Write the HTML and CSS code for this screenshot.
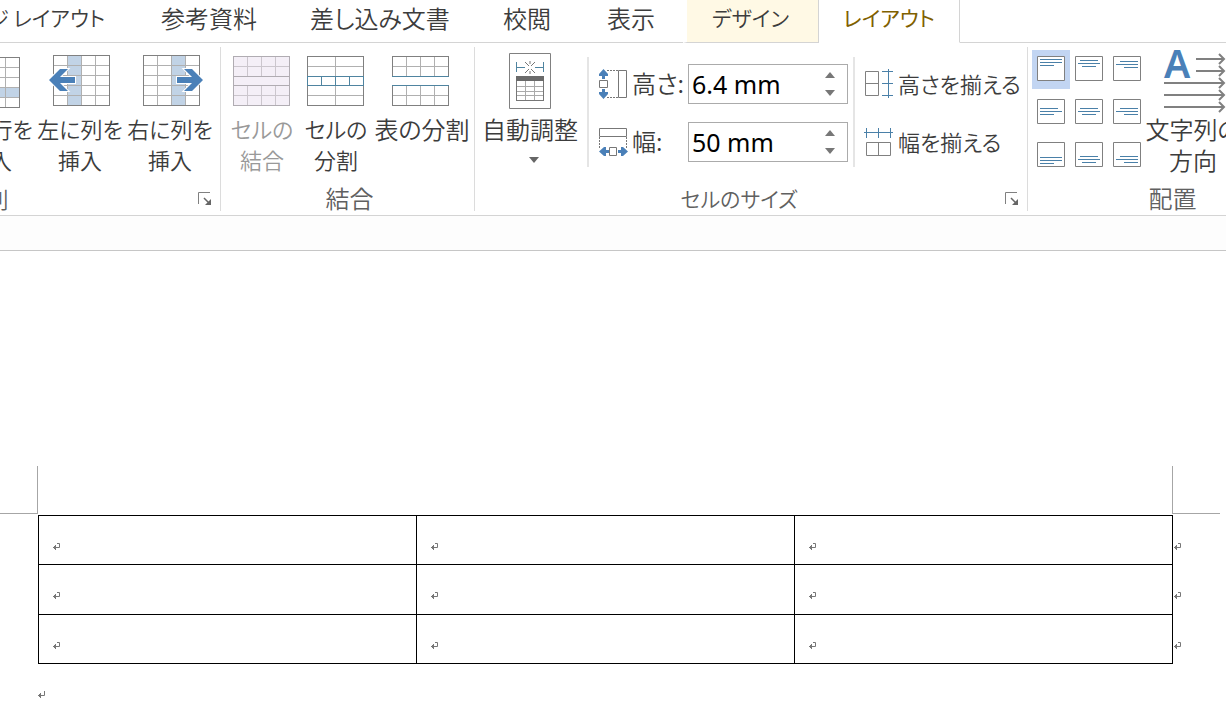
FILE: index.html
```html
<!DOCTYPE html>
<html lang="ja">
<head>
  <meta charset="utf-8">
  <title>レイアウト</title>
  <link rel="stylesheet" href="styles.css">
</head>
<body>

  <svg width="0" height="0" class="defs">
    <symbol id="cell-mark" viewBox="0 0 8 8">
      <path d="M4 .5h2.500v4h-4M2.500 2v5M1.500 3v3M.5 4v1" fill="none" stroke="#777"/>
    </symbol>
    <symbol id="para-mark" viewBox="0 0 8 8">
      <path d="M6.500 0v4.500h-4M2.500 2v5M1.500 3v3M.5 4v1" fill="none" stroke="#777"/>
    </symbol>
    <symbol id="launcher" viewBox="0 0 14 14">
      <path d="M.5 12V.5H12" fill="none" stroke="#808080"/>
      <path d="M6 6l5 5" stroke="#666" stroke-width="1.500"/>
      <path d="M13 7v6H7z" fill="#666"/>
    </symbol>
  </svg>

  <nav class="tabs">
    <button class="tab tab-first kana">ページ レイアウト</button>
    <button class="tab tab-wide">参考資料</button>
    <button class="tab tab-wider">差し込み文書</button>
    <button class="tab">校閲</button>
    <button class="tab">表示</button>
    <button class="tab tab-tool kana">デザイン</button>
    <button class="tab tab-active kana">レイアウト</button>
    <div class="tab-rest"></div>
  </nav>

  <div class="ribbon">
    <!-- rows and columns -->
    <section class="group group-rows">
      <div class="tools">
        <button class="big mixed">
          <svg width="64" height="60" shape-rendering="crispEdges">
            <path d="M5 37h56v10H5z" fill="#c1d3e6"/>
            <path d="M19.500 7v50M33.500 7v50M47.500 7v50M5 17.500h56M5 27.500h56M5 37.500h56M5 47.500h56" stroke="#b0b0b0" fill="none"/>
            <path d="M5.500 7.500h56v50h-56z" fill="none" stroke="#808080"/>
          </svg>
          <span>下に行を<br>挿入</span>
        </button>
        <button class="big mixed">
          <svg width="64" height="60">
            <g shape-rendering="crispEdges">
              <path d="M19 5h14v50H19z" fill="#c1d3e6"/>
              <path d="M19.500 5v50M33.500 5v50M47.500 5v50M5 15.500h56M5 25.500h56M5 35.500h56M5 45.500h56" stroke="#b0b0b0" fill="none"/>
              <path d="M5.500 5.500h56v50h-56z" fill="none" stroke="#808080"/>
            </g>
            <path d="M1 30L12 19h8l-8 8h15v6H12l8 8h-8z" fill="#4a80b8" stroke="#fff" stroke-width="2" paint-order="stroke"/>
          </svg>
          <span>左に列を<br>挿入</span>
        </button>
        <button class="big mixed">
          <svg width="64" height="60">
            <g shape-rendering="crispEdges">
              <path d="M33 5h14v50H33z" fill="#c1d3e6"/>
              <path d="M19.500 5v50M33.500 5v50M47.500 5v50M5 15.500h56M5 25.500h56M5 35.500h56M5 45.500h56" stroke="#b0b0b0" fill="none"/>
              <path d="M5.500 5.500h56v50h-56z" fill="none" stroke="#808080"/>
            </g>
            <path class="over" d="M65 30L54 19h-8l8 8H39v6h15l-8 8h8z" fill="#4a80b8" stroke="#fff" stroke-width="2" paint-order="stroke"/>
          </svg>
          <span>右に列を<br>挿入</span>
        </button>
      </div>
      <div class="caption mixed">
        <span>行と列</span>
        <button class="launcher" aria-label="行と列の詳細"><svg width="14" height="14"><use href="#launcher"/></svg></button>
      </div>
    </section>

    <!-- merge -->
    <section class="group group-merge">
      <div class="tools">
        <button class="big big-narrow mixed" disabled>
          <svg width="64" height="60" shape-rendering="crispEdges">
            <path d="M3 6h56v50H3z" fill="#f4eff7"/>
            <path d="M17.500 6v20M31.500 6v20M45.500 6v20M17.500 35v20M31.500 35v20M45.500 35v20M3 16.500h56M3 45.500h56" stroke="#cbc6cd" fill="none"/>
            <path d="M3.500 6.500h56v49h-56zM3 26.500h56M3 35.500h56" fill="none" stroke="#b0acb2"/>
          </svg>
          <span>セルの<br>結合</span>
        </button>
        <button class="big big-narrow mixed">
          <svg width="64" height="60" shape-rendering="crispEdges">
            <path d="M31.500 6v50M3 16.500h56M3 45.500h56" stroke="#b0b0b0" fill="none"/>
            <path d="M3.500 6.500h56v49h-56z" fill="none" stroke="#808080"/>
            <path d="M3.500 26.500h56v9h-56zM17.500 26v10M31.500 26v10M45.500 26v10" fill="none" stroke="#4f84a0"/>
          </svg>
          <span>セルの<br>分割</span>
        </button>
        <button class="big big-wide">
          <svg width="64" height="60" shape-rendering="crispEdges">
            <path d="M16.500 6v20M30.500 6v20M44.500 6v20M16.500 36v20M30.500 36v20M44.500 36v20M2 16.500h56M2 45.500h56" stroke="#b0b0b0" fill="none"/>
            <path d="M2.500 26V6.500h56V26M2.500 36v19.500h56V36" fill="none" stroke="#808080"/>
            <path d="M2 26.500h57M2 35.500h57" stroke="#4f84a0"/>
          </svg>
          <span>表の分割</span>
        </button>
      </div>
      <div class="caption"><span>結合</span></div>
    </section>

    <!-- cell size -->
    <section class="group group-size">
      <div class="tools">
        <button class="big big-wide">
          <svg width="64" height="60">
            <path d="M11.500 3.500h41v55h-41z" fill="#fff" stroke="#808080"/>
            <path d="M18.500 12v10M45.500 12v10M19 17.500h8M37 17.500h8" stroke="#4f84a0"/>
            <path d="M27 12l4 4M37 12l-4 4M27 23l4-4M37 23l-4-4M32 11v3M32 21v3" stroke="#777"/>
            <g shape-rendering="crispEdges">
              <path d="M18 36.500h28M18 41.500h28M18 45.500h28M27.500 27v24M36.500 27v24" stroke="#aaa"/>
              <path d="M18.500 26.500h27v24h-27z" fill="none" stroke="#777"/>
              <path d="M18 26h28v5H18z" fill="#6a6a6a"/>
            </g>
          </svg>
          <span>自動調整</span>
          <svg class="drop" width="12" height="6"><path d="M1 0h10L6 6z" fill="#666"/></svg>
        </button>
        <div class="fields">
          <div class="field">
            <svg width="29" height="30">
              <path d="M4.500 0L9 5v2H6v3H3V7H0V5zM4.500 30L9 25v-2H6v-3H3v3H0v2z" fill="#4a80b8"/>
              <path d="M.5 11.500h8v7h-8zM19.500 1.500h8v27h-8z" fill="none" stroke="#777"/>
              <path d="M8 1.500h11M8 28.500h11" stroke="#777" stroke-dasharray="2 1"/>
            </svg>
            <label for="cell-height">高さ:</label>
            <div class="spin">
              <input id="cell-height" type="text" value="6.4 mm">
              <div class="arrows">
                <button aria-label="高さを増やす"><svg width="12" height="6"><path d="M6 0l5 6H1z" fill="#777"/></svg></button>
                <button aria-label="高さを減らす"><svg width="12" height="6"><path d="M1 0h10L6 6z" fill="#777"/></svg></button>
              </div>
            </div>
          </div>
          <div class="field">
            <svg width="29" height="30">
              <path d="M.5 1.500h27v8H.5z" fill="none" stroke="#777"/>
              <path d="M.5 10v12M27.500 10v12" stroke="#777" stroke-dasharray="2 1"/>
              <path d="M0 24.500L5 20h2v3h3v3H7v3H5zM29 24.500L24 20h-2v3h-3v3h3v3h2z" fill="#4a80b8"/>
              <path d="M10.500 20.500h7v8h-7z" fill="#fff" stroke="#777"/>
            </svg>
            <label for="cell-width">幅:</label>
            <div class="spin">
              <input id="cell-width" type="text" value="50 mm">
              <div class="arrows">
                <button aria-label="幅を増やす"><svg width="12" height="6"><path d="M6 0l5 6H1z" fill="#777"/></svg></button>
                <button aria-label="幅を減らす"><svg width="12" height="6"><path d="M1 0h10L6 6z" fill="#777"/></svg></button>
              </div>
            </div>
          </div>
        </div>
        <div class="evens">
          <button class="even mixed">
            <svg width="30" height="30">
              <path d="M1.500 2.500h13v24h-13zM1 14.500h13" fill="none" stroke="#808080"/>
              <path d="M24.500 0v29M18 2.500h11M18 14.500h11M18 26.500h11" stroke="#4a80a8"/>
            </svg>
            <span>高さを揃える</span>
          </button>
          <button class="even mixed">
            <svg width="30" height="30">
              <path d="M2.500 15.500h24v13h-24zM14.500 15v13" fill="none" stroke="#808080"/>
              <path d="M0 5.500h29M2.500 1v10M14.500 1v10M26.500 1v10" stroke="#4a80a8"/>
            </svg>
            <span>幅を揃える</span>
          </button>
        </div>
      </div>
      <div class="caption kana">
        <span>セルのサイズ</span>
        <button class="launcher" aria-label="セルのサイズの詳細"><svg width="14" height="14"><use href="#launcher"/></svg></button>
      </div>
    </section>

    <!-- alignment -->
    <section class="group group-align">
      <div class="tools">
        <div class="aligns">
          <button class="align align-on" aria-label="上揃え (左)"><svg width="28" height="25"><path class="box" d="M.5.5h27v24H.5z"/><path class="ln" d="M3 3.500h22M3 6.500h22M3 9.500h14"/></svg></button>
          <button class="align" aria-label="上揃え (中央)"><svg width="28" height="25"><path class="box" d="M.5.5h27v24H.5z"/><path class="ln" d="M5 4.500h18M3 7.500h22M7 10.500h14"/></svg></button>
          <button class="align" aria-label="上揃え (右)"><svg width="28" height="25"><path class="box" d="M.5.5h27v24H.5z"/><path class="ln" d="M7 5.500h18M3 8.500h22M11 11.500h14"/></svg></button>
          <button class="align" aria-label="中央揃え (左)"><svg width="28" height="25"><path class="box" d="M.5.5h27v24H.5z"/><path class="ln" d="M3 9.500h18M3 12.500h22M3 15.500h14"/></svg></button>
          <button class="align" aria-label="中央揃え"><svg width="28" height="25"><path class="box" d="M.5.5h27v24H.5z"/><path class="ln" d="M5 9.500h18M3 12.500h22M7 15.500h14"/></svg></button>
          <button class="align" aria-label="中央揃え (右)"><svg width="28" height="25"><path class="box" d="M.5.5h27v24H.5z"/><path class="ln" d="M7 9.500h18M3 12.500h22M11 15.500h14"/></svg></button>
          <button class="align" aria-label="下揃え (左)"><svg width="28" height="25"><path class="box" d="M.5.5h27v24H.5z"/><path class="ln" d="M3 15.500h22M3 18.500h22M3 21.500h14"/></svg></button>
          <button class="align" aria-label="下揃え (中央)"><svg width="28" height="25"><path class="box" d="M.5.5h27v24H.5z"/><path class="ln" d="M5 14.500h18M3 17.500h22M7 20.500h14"/></svg></button>
          <button class="align" aria-label="下揃え (右)"><svg width="28" height="25"><path class="box" d="M.5.5h27v24H.5z"/><path class="ln" d="M7 14.500h18M3 17.500h22M11 20.500h14"/></svg></button>
        </div>
        <button class="big">
          <svg width="64" height="60">
            <text class="letter" x="3" y="28">A</text>
            <path d="M35 9h28M35 21h28M3 33h60M3 45h60M3 57h60" stroke="#808080" stroke-width="2"/>
            <path d="M58 4l5 5-5 5M58 16l5 5-5 5M58 28l5 5-5 5M58 40l5 5-5 5M58 52l5 5-5 5" fill="none" stroke="#808080" stroke-width="2"/>
          </svg>
          <span>文字列の<br>方向</span>
        </button>
      </div>
      <div class="caption"><span>配置</span></div>
    </section>
  </div>

  <div class="ruler"></div>

  <main class="page">
    <div class="margins">
      <div class="corner-left"></div>
      <div class="corner-right"></div>
    </div>
    <table class="grid">
      <tr>
        <td><svg class="mark"><use href="#cell-mark"/></svg></td>
        <td><svg class="mark"><use href="#cell-mark"/></svg></td>
        <td><svg class="mark"><use href="#cell-mark"/></svg></td>
        <td class="row-end"><svg class="mark"><use href="#cell-mark"/></svg></td>
      </tr>
      <tr>
        <td><svg class="mark"><use href="#cell-mark"/></svg></td>
        <td><svg class="mark"><use href="#cell-mark"/></svg></td>
        <td><svg class="mark"><use href="#cell-mark"/></svg></td>
        <td class="row-end"><svg class="mark"><use href="#cell-mark"/></svg></td>
      </tr>
      <tr>
        <td><svg class="mark"><use href="#cell-mark"/></svg></td>
        <td><svg class="mark"><use href="#cell-mark"/></svg></td>
        <td><svg class="mark"><use href="#cell-mark"/></svg></td>
        <td class="row-end"><svg class="mark"><use href="#cell-mark"/></svg></td>
      </tr>
    </table>
    <p class="after"><svg class="mark"><use href="#para-mark"/></svg></p>
  </main>

</body>
</html>
```
FILE: styles.css
```css
* {
  box-sizing: border-box;
}
body {
  margin: 0;
  overflow: hidden;
  background: #fff;
  color: #3c3c3c;
  font-family: "Noto Sans CJK JP", sans-serif;
  font-size: 24px;
  font-weight: 350;
  font-feature-settings: "palt";
}
button {
  margin: 0;
  padding: 0;
  border: none;
  background: none;
  color: inherit;
  font: inherit;
  font-feature-settings: inherit;
  white-space: nowrap;
  cursor: pointer;
}
button:disabled {
  color: #999;
  cursor: default;
}
svg {
  display: block;
  flex: none;
  overflow: visible;
}
.defs {
  position: absolute;
}

.mixed {
  font-size: 22px;
}
.kana {
  font-size: 21px;
}

/* tabs */
.tabs {
  display: flex;
  height: 43px;
}
.tab {
  flex: none;
  width: 104px;
  padding-bottom: 8px;
  border-bottom: 1px solid #d4d4d4;
}
.tab-first {
  display: flex;
  align-items: center;
  justify-content: flex-end;
  width: 133px;
  padding-right: 28px;
  overflow: hidden;
}
.tab-wide {
  width: 152px;
}
.tab-wider {
  width: 190px;
}
.tab-tool {
  width: 136px;
  padding-right: 4px;
  border-left: 4px solid #fff;
  border-right: 1px solid #d4d4d4;
  background: #fff9e5;
}
.tab-active {
  width: 141px;
  border-right: 1px solid #d4d4d4;
  border-bottom-color: #fff;
  color: #7f6000;
  font-weight: 400;
}
.tab-rest {
  flex: 1;
  border-bottom: 1px solid #d4d4d4;
}

/* ribbon */
.ribbon {
  display: flex;
  padding: 4px 0;
  border-bottom: 1px solid #d4d4d4;
  overflow: hidden;
}
.group {
  display: flex;
  flex: none;
  flex-direction: column;
  border-right: 1px solid #dcdcdc;
}
.group-rows {
  margin-left: -60px;
  padding-left: 5px;
  width: 281px;
}
.group-merge {
  padding-left: 4px;
  width: 254px;
}
.group-size {
  padding-left: 6px;
  width: 553px;
}
.group-align {
  width: 290px;
}
.tools {
  display: flex;
  height: 134px;
  padding-top: 3px;
}
.big {
  display: flex;
  flex-direction: column;
  align-items: center;
  width: 90px;
  line-height: 31px;
}
.big span {
  margin-top: 3px;
}
.big-narrow {
  width: 74px;
}
.big-wide {
  width: 98px;
}
.drop {
  margin: 13px 0 0 8px;
}
.caption {
  display: flex;
  align-items: center;
  height: 30px;
  padding-top: 4px;
  line-height: 26px;
  color: #606060;
}
.caption span {
  flex: 1;
  text-align: center;
}
.group-rows .caption span {
  text-align: left;
}
.launcher {
  width: 14px;
  margin: 2px 8px 0;
}

/* cell size */
.fields {
  display: flex;
  flex-direction: column;
  gap: 18px;
  height: 110px;
  margin: 7px 0 0 8px;
  padding: 7px 5px 0 10px;
  border-left: 2px solid #e5e5e5;
  border-right: 2px solid #e5e5e5;
}
.field {
  display: flex;
  align-items: center;
  height: 40px;
}
.field label {
  width: 56px;
  padding: 0 0 4px 4px;
  white-space: nowrap;
}
.spin {
  display: flex;
  width: 160px;
  height: 40px;
  margin-left: 4px;
  border: 1px solid #ababab;
}
.spin input {
  width: 124px;
  padding: 0 3px;
  border: none;
  outline: none;
  background: none;
  color: #000;
  font-family: "Noto Sans", sans-serif;
  font-size: 25px;
}
.arrows {
  display: flex;
  flex: 1;
  flex-direction: column;
  justify-content: center;
  gap: 12px;
}
.arrows button {
  display: flex;
  justify-content: center;
}
.evens {
  display: flex;
  flex-direction: column;
  gap: 18px;
  padding: 14px 0 0 9px;
}
.even {
  display: flex;
  align-items: center;
  gap: 4px;
  height: 40px;
}
.even span {
  padding-bottom: 2px;
}

/* alignment */
.aligns {
  display: grid;
  grid-template-columns: 38px 38px 38px;
  grid-template-rows: 39px 39px 39px;
  gap: 4px 0;
  margin: 0 2px 0 4px;
}
.align {
  display: flex;
  align-items: center;
  justify-content: center;
  padding-bottom: 2px;
}
.align-on {
  background: #c2d5f2;
}
.box {
  fill: #fff;
  stroke: #808080;
}
.ln {
  stroke: #4a80a8;
}
.letter {
  fill: #4a80b8;
  font-family: "Noto Sans", sans-serif;
  font-size: 39px;
  font-weight: 600;
}

/* document */
.ruler {
  height: 35px;
  border-bottom: 1px solid #c6c6c6;
  background: #fdfdfd;
}
.page {
  padding-top: 215px;
}
.margins {
  display: flex;
  justify-content: space-between;
  padding-right: 6px;
}
.corner-left {
  width: 38px;
  height: 48px;
  border-right: 1px solid #a6a6a6;
  border-bottom: 1px solid #a6a6a6;
}
.corner-right {
  width: 48px;
  height: 48px;
  border-left: 1px solid #a6a6a6;
  border-bottom: 1px solid #a6a6a6;
}
.grid {
  width: calc(100% - 80px);
  height: 149px;
  margin: 1px 0 0 38px;
  border-collapse: collapse;
  table-layout: fixed;
}
.grid td {
  padding: 14px 0 0 14px;
  border: 1px solid #000;
}
.grid .row-end {
  width: 12px;
  padding-left: 1px;
  border-width: 0 0 0 1px;
}
.mark {
  width: 8px;
  height: 8px;
}
.after {
  margin: 27px 0 0 38px;
}
```
